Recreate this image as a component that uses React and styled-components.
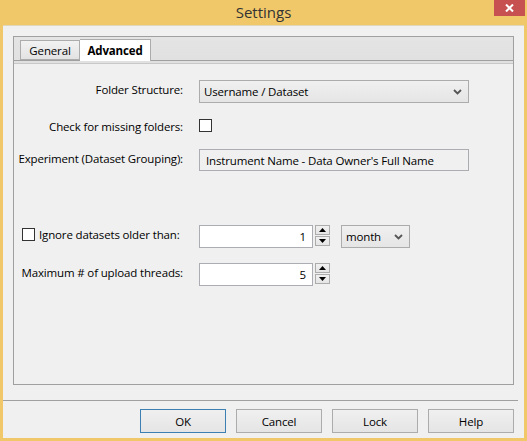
import styled, { createGlobalStyle } from 'styled-components'

const GlobalStyle = createGlobalStyle`
  html, body {
    margin: 0;
    padding: 0;
    background: #f0c869;
  }
  * {
    box-sizing: border-box;
  }
`;

const Window = styled.div`
  width: 527px;
  height: 441px;

  display: flex;
  flex-direction: column;

  background: #f0c869;
  font-family: "Open Sans", "Noto Sans", sans-serif;
  font-size: 11.5px;
  letter-spacing: -0.15px;
  color: #000;
`;

const TitleBar = styled.div`
  height: 25px;
  position: relative;

  display: flex;
  align-items: center;
  justify-content: center;
`;

const Title = styled.div`
  font-size: 15px;
  letter-spacing: 0;
  color: #333;
  margin-top: -1px;
`;

const CloseButton = styled.div`
  position: absolute;
  top: 0;
  right: 2px;
  width: 31px;
  height: 16px;

  display: flex;
  align-items: center;
  justify-content: center;

  background: #c75050;
`;

const Client = styled.div`
  flex: 1;
  margin: 0 3px 3px 3px;

  display: flex;
  flex-direction: column;

  background: #f0f0f0;
  border-top: 1px solid #e0d6b8;
`;

const TabFrame = styled.div`
  height: 349px;
  margin: 10px 10px 0 10px;

  display: flex;
  flex-direction: column;

  border: 1px solid #a0a0a0;
  background: linear-gradient(#e4e4e4, #cdcdcd 45%, #e8e8e8 24px, #f0f0f0 25px);
`;

const TabStrip = styled.div`
  height: 24px;
  padding: 3px 0 0 6px;

  display: flex;
  align-items: flex-end;

  border-bottom: 1px solid #a0a0a0;
`;

const Tab = styled.div`
  width: ${props => props.$width}px;
  height: ${props => props.$active ? '22px' : '20px'};
  margin-bottom: ${props => props.$active ? '-1px' : '0'};

  display: flex;
  align-items: center;
  justify-content: center;

  border: 1px solid #acacac;
  border-bottom: ${props => props.$active ? 'none' : '1px solid #acacac'};
  border-left: ${props => props.$active ? 'none' : '1px solid #acacac'};
  background: ${props => props.$active ? '#ffffff' : 'linear-gradient(#f2f2f2, #e3e3e3)'};
  font-weight: ${props => props.$active ? 700 : 400};
`;

const TabPage = styled.div`
  flex: 1;
  margin: 2px 0 0 0;
  padding-top: 16px;

  display: flex;
  flex-direction: column;

  border-top: 1px solid #c8c8c8;
  background: #f0f0f0;
`;

const Row = styled.div`
  margin-top: ${props => props.$top || 0}px;
  height: ${props => props.$height || 23}px;

  display: grid;
  grid-template-columns: 169px auto;
  column-gap: 16px;
  align-items: start;
`;

const Label = styled.div`
  padding-top: ${props => props.$pad ?? 2}px;
  padding-left: ${props => props.$left || 0}px;

  display: flex;
  align-items: center;
  justify-content: ${props => props.$left ? 'flex-start' : 'flex-end'};
  gap: 4px;

  white-space: nowrap;
`;

const Fields = styled.div`
  display: flex;
  align-items: flex-start;
`;

const Select = styled.div`
  width: ${props => props.$width}px;
  height: 23px;
  margin-left: ${props => props.$offset || 0}px;
  padding: 0 6px 0 4px;

  display: flex;
  align-items: center;
  justify-content: space-between;

  border: 1px solid #acacac;
  background: linear-gradient(#f0f0f0, #e5e5e5);
`;

const TextBox = styled.div`
  width: ${props => props.$width}px;
  height: ${props => props.$height || 23}px;
  padding: 0 6px;

  display: flex;
  align-items: center;
  justify-content: ${props => props.$right ? 'flex-end' : 'flex-start'};

  border: 1px solid #abadb3;
  background: ${props => props.$white ? '#ffffff' : '#f0f0f0'};
`;

const CheckBox = styled.div`
  width: 13px;
  height: 13px;
  flex: none;

  border: 1px solid #333;
  background: #ffffff;
`;

const Spinner = styled.div`
  margin-left: 2px;

  display: flex;
  flex-direction: column;
  gap: 1px;
`;

const SpinButton = styled.div`
  width: 15px;
  height: 10px;

  display: flex;
  align-items: center;
  justify-content: center;

  border: 1px solid #acacac;
  background: linear-gradient(#f0f0f0, #e5e5e5);
`;

const Separator = styled.div`
  height: 1px;
  margin: 15px 6px 0 0;
  background: #a0a0a0;
`;

const ButtonRow = styled.div`
  margin-top: 8px;
  padding-right: 10px;

  display: flex;
  justify-content: flex-end;
  gap: 10px;
`;

const Button = styled.div`
  width: 86px;
  height: 24px;

  display: flex;
  align-items: center;
  justify-content: center;

  border: 1px solid ${props => props.$default ? '#3c7fb1' : '#acacac'};
  background: linear-gradient(#f0f0f0, #e5e5e5);
`;

const Chevron = () => (
  <svg width="9" height="6" viewBox="0 0 9 6">
    <path d="M1 1 L4.5 4.5 L8 1" fill="none" stroke="#555" strokeWidth="1.8" />
  </svg>
);

const Arrow = ({ up }) => (
  <svg width="7" height="4" viewBox="0 0 7 4">
    <path d={up ? 'M0 4 L3.5 0 L7 4 Z' : 'M0 0 L3.5 4 L7 0 Z'} fill="#000" />
  </svg>
);

const NumberField = ({ value }) => (
  <>
    <TextBox $width={114} $white $right>{value}</TextBox>
    <Spinner>
      <SpinButton><Arrow up /></SpinButton>
      <SpinButton><Arrow /></SpinButton>
    </Spinner>
  </>
);

const App = () => {
  return (
    <Window>
      <GlobalStyle />
      <TitleBar>
        <Title>Settings</Title>
        <CloseButton>
          <svg width="9" height="8" viewBox="0 0 9 8">
            <path d="M1 0.5 L8 7.5 M8 0.5 L1 7.5" stroke="#fff" strokeWidth="2" />
          </svg>
        </CloseButton>
      </TitleBar>
      <Client>
        <TabFrame>
          <TabStrip>
            <Tab $width={60}>General</Tab>
            <Tab $width={71} $active>Advanced</Tab>
          </TabStrip>
          <TabPage>
            <Row $height={23}>
              <Label>Folder Structure:</Label>
              <Fields>
                <Select $width={270}>Username / Dataset<Chevron /></Select>
              </Fields>
            </Row>
            <Row $top={16} $height={13}>
              <Label $pad={0}>Check for missing folders:</Label>
              <Fields><CheckBox /></Fields>
            </Row>
            <Row $top={17} $height={22}>
              <Label>Experiment (Dataset Grouping):</Label>
              <Fields>
                <TextBox $width={270} $height={22}>Instrument Name - Data Owner's Full Name</TextBox>
              </Fields>
            </Row>
            <Row $top={54}>
              <Label $left={8}><CheckBox />Ignore datasets older than:</Label>
              <Fields>
                <NumberField value="1" />
                <Select $width={69} $offset={11}>month<Chevron /></Select>
              </Fields>
            </Row>
            <Row $top={15}>
              <Label>Maximum # of upload threads:</Label>
              <Fields>
                <NumberField value="5" />
              </Fields>
            </Row>
          </TabPage>
        </TabFrame>
        <Separator />
        <ButtonRow>
          <Button $default>OK</Button>
          <Button>Cancel</Button>
          <Button>Lock</Button>
          <Button>Help</Button>
        </ButtonRow>
      </Client>
    </Window>
  );
}

export default App
